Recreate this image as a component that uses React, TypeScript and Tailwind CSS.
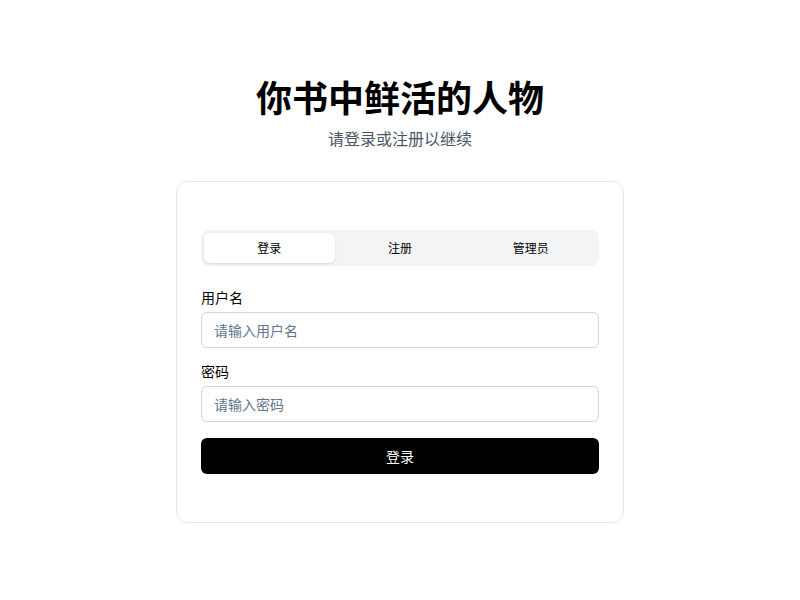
import { useState } from "react";

const tabs = ["登录", "注册", "管理员"];

export default function App() {
  const [active, setActive] = useState(0);

  return (
    <div
      className="flex min-h-screen w-full flex-col items-center bg-white pt-[79px] text-black"
      style={{ fontFamily: '"Inter", "Noto Sans CJK SC", sans-serif' }}
    >
      <h1 className="text-4xl leading-10 font-bold">你书中鲜活的人物</h1>
      <p className="mt-2 text-base leading-6 text-gray-600">请登录或注册以继续</p>

      <div className="mt-[30px] w-[448px] rounded-xl border border-gray-200 bg-white px-6 pt-12 pb-12">
        <div className="grid h-9 grid-cols-3 items-center rounded-lg bg-gray-100 p-[3px]">
          {tabs.map((tab, i) => (
            <button
              key={tab}
              onClick={() => setActive(i)}
              className={
                i === active
                  ? "h-full rounded-md bg-white pt-0.5 text-xs text-black shadow-sm"
                  : "h-full rounded-md pt-0.5 text-xs text-black"
              }
            >
              {tab}
            </button>
          ))}
        </div>

        <form className="mt-6 flex flex-col gap-4" onSubmit={(e) => e.preventDefault()}>
          <div className="flex flex-col gap-1.5">
            <label className="text-sm leading-4">用户名</label>
            <input
              placeholder="请输入用户名"
              className="h-9 w-full rounded-md border border-gray-300 px-3 text-sm outline-none placeholder:text-slate-500"
            />
          </div>
          <div className="flex flex-col gap-1.5">
            <label className="text-sm leading-4">密码</label>
            <input
              type="password"
              placeholder="请输入密码"
              className="h-9 w-full rounded-md border border-gray-300 px-3 text-sm outline-none placeholder:text-slate-500"
            />
          </div>
          <button className="h-9 w-full rounded-md bg-black pt-0.5 text-sm text-white">登录</button>
        </form>
      </div>
    </div>
  );
}
